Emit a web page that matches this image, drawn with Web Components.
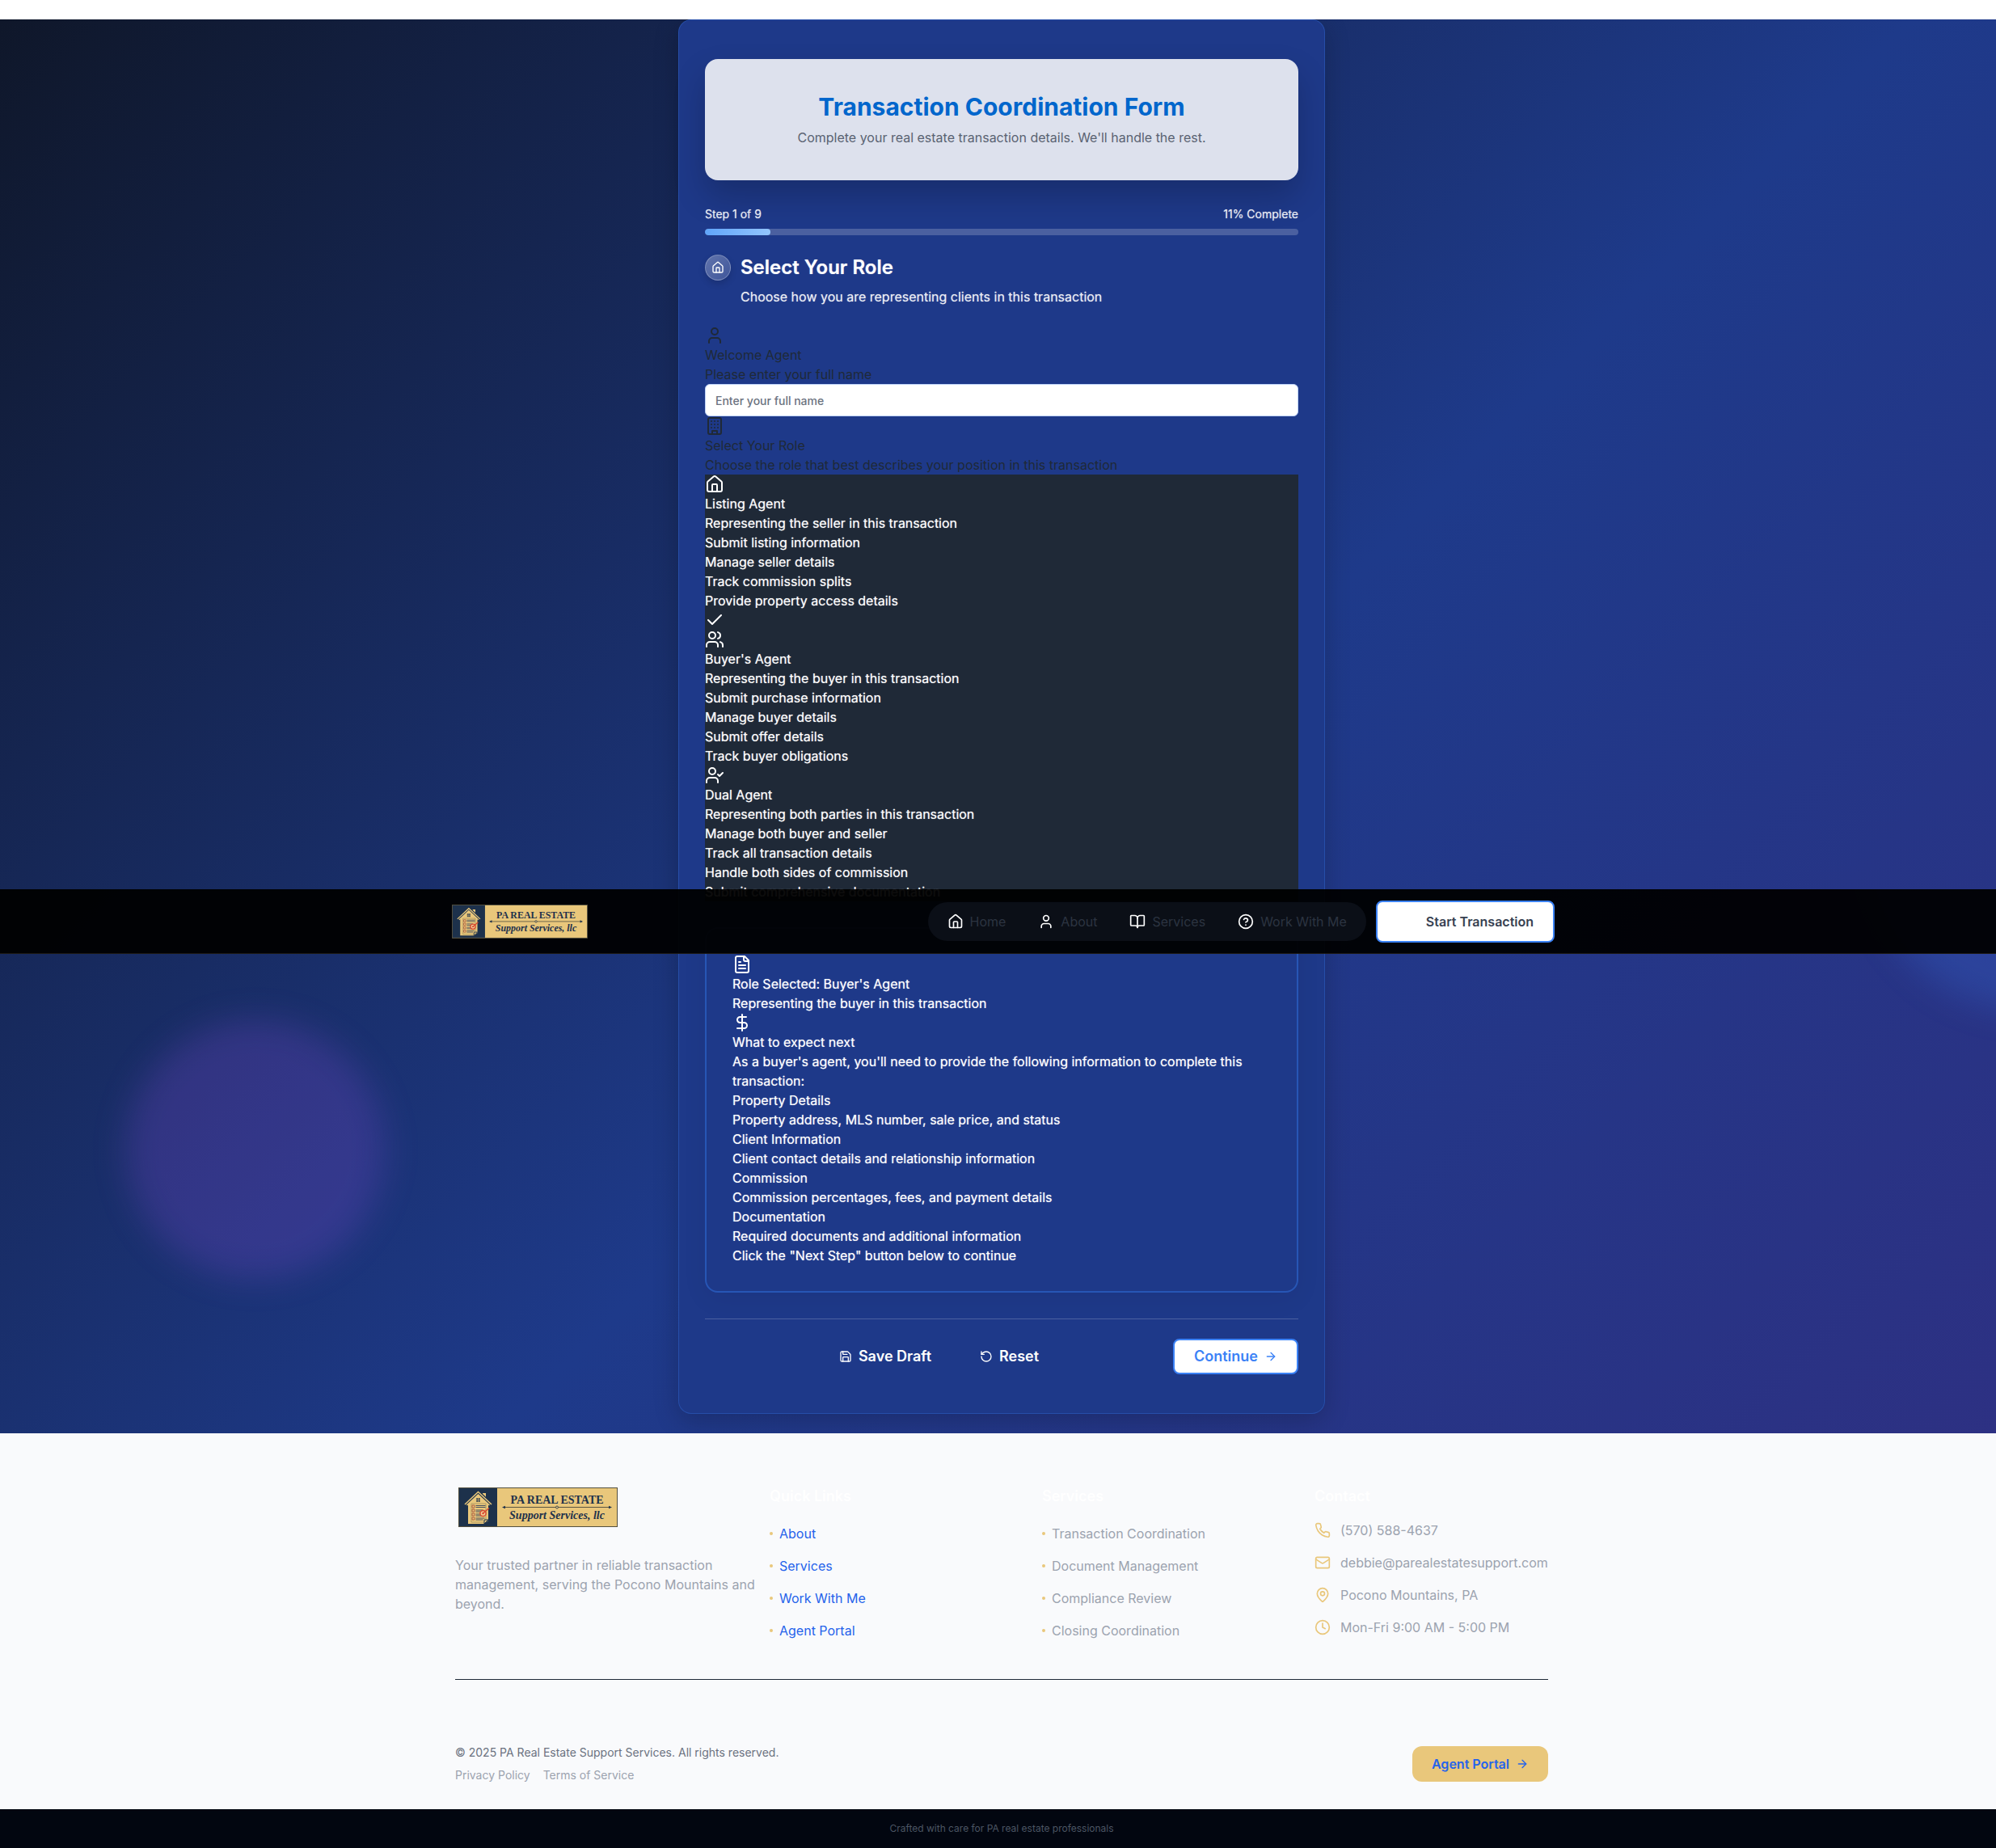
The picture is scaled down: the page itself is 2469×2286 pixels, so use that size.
<!DOCTYPE html>
<html lang="en">
<head>
<meta charset="utf-8">
<meta name="viewport" content="width=device-width, initial-scale=1">
<title>Transaction Coordination Form</title>
<style>
  :root { --rail: 9px; --gold: #e9c77b; --blue: #3b82f6; --ink: #1f2937; --muted: #9ca3af; --lift: 0 0 1px rgba(255,255,255,.6); }
  html, body { margin: 0; }
  body { position: relative; padding-top: 24px; background: #fff; color: var(--ink); font: 400 16px/24px Inter, "Liberation Sans", sans-serif; overflow-x: hidden; }
</style>
</head>
<body>
<pa-hero>
  <pa-form-card>
    <pa-form-banner>
      <span slot="title">Transaction Coordination Form</span>
      <span slot="text">Complete your real estate transaction details. We'll handle the rest.</span>
    </pa-form-banner>
    <pa-progress></pa-progress>
    <pa-step-heading>
      <span slot="title">Select Your Role</span>
      <span slot="text">Choose how you are representing clients in this transaction</span>
    </pa-step-heading>
    <pa-agent-name></pa-agent-name>
    <pa-lines icon="building">
      <div>Select Your Role</div>
      <div>Choose the role that best describes your position in this transaction</div>
    </pa-lines>
    <pa-role-list>
      <pa-lines icon="house" end-icon="check">
        <div>Listing Agent</div>
        <div>Representing the seller in this transaction</div>
        <div>Submit listing information</div>
        <div>Manage seller details</div>
        <div>Track commission splits</div>
        <div>Provide property access details</div>
      </pa-lines>
      <pa-lines icon="users">
        <div>Buyer's Agent</div>
        <div>Representing the buyer in this transaction</div>
        <div>Submit purchase information</div>
        <div>Manage buyer details</div>
        <div>Submit offer details</div>
        <div>Track buyer obligations</div>
      </pa-lines>
      <pa-lines icon="user-check">
        <div>Dual Agent</div>
        <div>Representing both parties in this transaction</div>
        <div>Manage both buyer and seller</div>
        <div>Track all transaction details</div>
        <div>Handle both sides of commission</div>
        <div>Submit comprehensive documentation</div>
      </pa-lines>
    </pa-role-list>
    <pa-summary>
      <pa-lines icon="file">
        <div>Role Selected: Buyer's Agent</div>
        <div>Representing the buyer in this transaction</div>
      </pa-lines>
      <pa-lines icon="dollar">
        <div>What to expect next</div>
        <div>As a buyer's agent, you'll need to provide the following information to complete this transaction:</div>
        <div>Property Details</div>
        <div>Property address, MLS number, sale price, and status</div>
        <div>Client Information</div>
        <div>Client contact details and relationship information</div>
        <div>Commission</div>
        <div>Commission percentages, fees, and payment details</div>
        <div>Documentation</div>
        <div>Required documents and additional information</div>
        <div>Click the "Next Step" button below to continue</div>
      </pa-lines>
    </pa-summary>
    <pa-form-actions></pa-form-actions>
  </pa-form-card>
</pa-hero>
<pa-footer></pa-footer>
<pa-nav></pa-nav>

<script>
const ICONS = {
  house: '<path d="M15 21v-8a1 1 0 0 0-1-1h-4a1 1 0 0 0-1 1v8"/><path d="M3 10a2 2 0 0 1 .709-1.528l7-5.999a2 2 0 0 1 2.582 0l7 5.999A2 2 0 0 1 21 10v9a2 2 0 0 1-2 2H5a2 2 0 0 1-2-2z"/>',
  user: '<path d="M19 21v-2a4 4 0 0 0-4-4H9a4 4 0 0 0-4 4v2"/><circle cx="12" cy="7" r="4"/>',
  building: '<rect width="16" height="20" x="4" y="2" rx="2"/><path d="M9 22v-4h6v4"/><path d="M8 6h.01M16 6h.01M12 6h.01M12 10h.01M12 14h.01M16 10h.01M16 14h.01M8 10h.01M8 14h.01"/>',
  check: '<path d="M20 6 9 17l-5-5"/>',
  users: '<path d="M16 21v-2a4 4 0 0 0-4-4H6a4 4 0 0 0-4 4v2"/><circle cx="9" cy="7" r="4"/><path d="M22 21v-2a4 4 0 0 0-3-3.87"/><path d="M16 3.13a4 4 0 0 1 0 7.75"/>',
  'user-check': '<path d="m16 11 2 2 4-4"/><path d="M16 21v-2a4 4 0 0 0-4-4H6a4 4 0 0 0-4 4v2"/><circle cx="9" cy="7" r="4"/>',
  file: '<path d="M15 2H6a2 2 0 0 0-2 2v16a2 2 0 0 0 2 2h12a2 2 0 0 0 2-2V7Z"/><path d="M14 2v4a2 2 0 0 0 2 2h4"/><path d="M10 9H8M16 13H8M16 17H8"/>',
  dollar: '<path d="M12 2v20"/><path d="M17 5H9.5a3.5 3.5 0 0 0 0 7h5a3.5 3.5 0 0 1 0 7H6"/>',
  save: '<path d="M15.2 3a2 2 0 0 1 1.4.6l3.8 3.8a2 2 0 0 1 .6 1.4V19a2 2 0 0 1-2 2H5a2 2 0 0 1-2-2V5a2 2 0 0 1 2-2z"/><path d="M17 21v-7a1 1 0 0 0-1-1H8a1 1 0 0 0-1 1v7"/><path d="M7 3v4a1 1 0 0 0 1 1h7"/>',
  reset: '<path d="M3 12a9 9 0 1 0 9-9 9.75 9.75 0 0 0-6.74 2.74L3 8"/><path d="M3 3v5h5"/>',
  arrow: '<path d="M5 12h14"/><path d="m12 5 7 7-7 7"/>',
  book: '<path d="M12 7v14"/><path d="M3 18a1 1 0 0 1-1-1V4a1 1 0 0 1 1-1h5a4 4 0 0 1 4 4 4 4 0 0 1 4-4h5a1 1 0 0 1 1 1v13a1 1 0 0 1-1 1h-6a3 3 0 0 0-3 3 3 3 0 0 0-3-3z"/>',
  help: '<circle cx="12" cy="12" r="10"/><path d="M9.09 9a3 3 0 0 1 5.83 1c0 2-3 3-3 3"/><path d="M12 17h.01"/>',
  phone: '<path d="M22 16.92v3a2 2 0 0 1-2.18 2 19.79 19.79 0 0 1-8.63-3.07 19.5 19.5 0 0 1-6-6 19.79 19.79 0 0 1-3.07-8.67A2 2 0 0 1 4.11 2h3a2 2 0 0 1 2 1.72 12.84 12.84 0 0 0 .7 2.81 2 2 0 0 1-.45 2.11L8.09 9.91a16 16 0 0 0 6 6l1.27-1.27a2 2 0 0 1 2.11-.45 12.84 12.84 0 0 0 2.81.7A2 2 0 0 1 22 16.92z"/>',
  mail: '<rect width="20" height="16" x="2" y="4" rx="2"/><path d="m22 7-8.97 5.7a1.94 1.94 0 0 1-2.06 0L2 7"/>',
  pin: '<path d="M20 10c0 4.993-5.539 10.193-7.399 11.799a1 1 0 0 1-1.202 0C9.539 20.193 4 14.993 4 10a8 8 0 0 1 16 0"/><circle cx="12" cy="10" r="3"/>',
  clock: '<circle cx="12" cy="12" r="10"/><path d="M12 6v6l4 2"/>'
};

function define(name, css, html) {
  customElements.define(name, class extends HTMLElement {
    connectedCallback() {
      if (this.shadowRoot) return;
      const root = this.attachShadow({ mode: 'open' });
      root.innerHTML = '<style>*{box-sizing:border-box}' + css + '</style>' +
        (typeof html === 'function' ? html(this) : html);
    }
  });
}

define('pa-icon', ':host{display:inline-block;flex:none;width:24px;height:24px}:host([size="20"]){width:20px;height:20px}:host([size="16"]){width:16px;height:16px}svg{display:block;width:100%;height:100%;fill:none;stroke:currentColor;stroke-width:2;stroke-linecap:round;stroke-linejoin:round}',
  el => `<svg viewBox="0 0 24 24" aria-hidden="true">${ICONS[el.getAttribute('name')]}</svg>`);

define('pa-logo', ':host{display:block;flex:none;width:197px}:host([small]){width:168px}svg{display:block;width:100%;height:auto}', `
<svg viewBox="0 0 197 49" role="img" aria-label="PA Real Estate Support Services, llc">
  <rect x=".5" y=".5" width="196" height="48" fill="#e9c77b" stroke="#54503f"/>
  <rect x="1" y="1" width="47" height="47" fill="#1d314b"/>
  <path d="M30 7h4v8l-4-4z" fill="#e9c77b"/>
  <path d="M12 20 24 8l13 12v21l-5 4H12z" fill="#e9c77b"/>
  <path d="M8 21 24.500 5.500 41 21" fill="none" stroke="#1d314b" stroke-width="4"/>
  <path d="M8 21 24.500 5.500 41 21M10.500 22 24.500 9 38.500 22" fill="none" stroke="#e9c77b" stroke-width="1.500"/>
  <path d="M22 13h5v5h-5zM24.500 13v5M22 15.500h5" fill="#1d314b" stroke="#e9c77b" stroke-width=".6"/>
  <path d="M16 20h18v23H16z" fill="#e9c77b" stroke="#8d8058" stroke-width=".6"/>
  <path d="M21.500 22.500h12M21.500 24.500h12M21.500 28h9M21.500 30h6M21.500 33h6M21.500 35h8M21.500 38h11M21.500 40h9" stroke="#35435a" stroke-width=".9"/>
  <path d="M17 22h3v3h-3zM17 27h3v3h-3zM17 32h3v3h-3zM17 37h3v3h-3z" fill="none" stroke="#a8553c" stroke-width=".9"/>
  <path d="m32 45v-5h5z" fill="#e9c77b" stroke="#1d314b"/>
  <circle cx="30.500" cy="32" r="3.600" fill="#f0cf98" stroke="#d9492f" stroke-width="1.500"/>
  <path d="m30 32.500 8-7" stroke="#d9492f" stroke-width="1.500"/>
  <circle cx="30.500" cy="32" r="1.200" fill="#d9492f"/>
  <text x="122" y="19.500" text-anchor="middle" font-family="Liberation Serif, serif" font-weight="700" font-size="14" fill="#1d314b">PA REAL ESTATE</text>
  <path d="M56 24.500h132" stroke="#4b4a3d" stroke-width=".9"/>
  <path d="m54 24.500 4-1.800v3.600zM190 24.500l-4-1.800v3.600z" fill="#1d314b"/>
  <circle cx="122" cy="24.500" r="1.500" fill="#e9c77b" stroke="#1d314b" stroke-width=".8"/>
  <text x="122" y="39" text-anchor="middle" font-family="Liberation Serif, serif" font-style="italic" font-weight="700" font-size="14" fill="#1d314b">Support Services, llc</text>
</svg>`);

define('pa-hero', `
:host{display:block;position:relative;overflow:hidden;padding:0 0 24px var(--rail);background:linear-gradient(135deg,#0f172a 0%,#1e3a8a 56%,#312e81 112%)}
.glow{position:absolute;border-radius:50%}
.violet{left:156px;bottom:191px;width:320px;height:320px;background:rgba(168,85,247,.18);filter:blur(20px)}
.clip{position:absolute;top:1076px;right:0;bottom:0;width:400px;overflow:hidden}
.azure{right:-240px;top:-250px;width:400px;height:400px;background:rgba(59,130,246,.2);filter:blur(20px)}
`, '<div class="glow violet"></div><div class="clip"><div class="glow azure"></div></div><slot></slot>');

define('pa-form-card', `
:host{display:block;position:relative;box-sizing:border-box;max-width:800px;margin:0 auto;padding:48px 32px;background:#1e3989;border:1px solid rgba(59,130,246,.3);border-radius:16px;box-shadow:0 8px 32px rgba(0,0,0,.2)}
`, '<slot></slot>');

define('pa-form-banner', `
:host{display:block;padding:41px 32px;text-align:center;background:#dde1ed;border-radius:16px;box-shadow:0 20px 40px rgba(0,0,0,.2)}
h1{margin:0 0 8px;font-size:30px;line-height:36px;font-weight:700;color:#0066cc}
p{margin:0;color:#5a6372}
`, '<h1><slot name="title"></slot></h1><p><slot name="text"></slot></p>');

define('pa-progress', `
:host{display:block;margin-top:32px;font-size:14px;line-height:20px;color:rgba(255,255,255,.85);text-shadow:var(--lift)}
.row{display:flex;justify-content:space-between;margin-bottom:8px}
.track{height:8px;border-radius:4px;background:rgba(255,255,255,.2);overflow:hidden}
.fill{width:11%;height:100%;border-radius:4px;background:linear-gradient(90deg,#60a5fa,#93c5fd)}
`, '<div class="row"><span>Step 1 of 9</span><span>11% Complete</span></div><div class="track" role="progressbar" aria-valuenow="11" aria-valuemin="0" aria-valuemax="100" aria-label="Form progress"><div class="fill"></div></div>');

define('pa-step-heading', `
:host{display:flex;gap:12px;margin:24px 0;text-shadow:var(--lift)}
.badge{display:flex;flex:none;align-items:center;justify-content:center;width:32px;height:32px;border:1px solid rgba(255,255,255,.25);border-radius:50%;background:linear-gradient(135deg,rgba(255,255,255,.3),rgba(255,255,255,.15));color:#fff;box-shadow:0 4px 8px rgba(0,0,0,.15)}
h2{margin:0 0 8px;font-size:24px;line-height:32px;font-weight:600;color:#fff}
p{margin:0;color:rgba(255,255,255,.85)}
`, '<span class="badge"><pa-icon name="house" size="16"></pa-icon></span><div><h2><slot name="title"></slot></h2><p><slot name="text"></slot></p></div>');

define('pa-lines', ':host{display:block}pa-icon{display:block}', el =>
  `<pa-icon name="${el.getAttribute('icon')}"></pa-icon><slot></slot>` +
  (el.hasAttribute('end-icon') ? `<pa-icon name="${el.getAttribute('end-icon')}"></pa-icon>` : ''));

define('pa-agent-name', `
:host{display:block}
pa-icon,label{display:block}
input{display:block;width:100%;height:40px;padding:0 12px;border:1px solid #bfd3f8;border-radius:6px;background:#fff;color:#1f2937;font:500 14px/20px Inter,"Liberation Sans",sans-serif}
input::placeholder{color:#6b7280;opacity:1}
`, '<pa-icon name="user"></pa-icon><div>Welcome Agent</div><label for="name">Please enter your full name</label><input id="name" type="text" placeholder="Enter your full name">');

define('pa-role-list', ':host{display:block;background:#1f2937;color:#fff;text-shadow:var(--lift)}', '<slot></slot>');

define('pa-summary', `
:host{display:block;margin:32px 0;padding:32px;border:2px solid #2756b5;border-radius:16px;color:#fff;text-shadow:var(--lift);box-shadow:0 8px 32px rgba(0,0,0,.06)}
`, '<slot></slot>');

define('pa-form-actions', `
:host{display:flex;align-items:center;justify-content:space-between;padding-top:24px;border-top:1px solid rgba(255,255,255,.2)}
.mid{display:flex;gap:8px}
button{display:flex;align-items:center;gap:8px;height:44px;padding:0 24px;border:2px solid transparent;border-radius:8px;background:none;color:#fff;font:600 18px/24px Inter,"Liberation Sans",sans-serif}
.next{background:#fff;border-color:#3b82f6;color:#3b82f6}
`, '<span></span><div class="mid"><button type="button"><pa-icon name="save" size="16"></pa-icon>Save Draft</button><button type="button"><pa-icon name="reset" size="16"></pa-icon>Reset</button></div><button class="next" type="button">Continue<pa-icon name="arrow" size="16"></pa-icon></button>');

define('pa-nav', `
:host{display:block;position:absolute;top:1100px;left:0;right:0;box-sizing:border-box;height:80px;padding-left:var(--rail);background:rgba(0,0,0,.95);box-shadow:inset 0 -1px rgba(233,199,123,.12)}
.inner{display:flex;align-items:center;justify-content:space-between;height:100%;max-width:1400px;margin:0 auto;padding:0 16px;box-sizing:border-box}
.home{padding:0 4px}
.right,nav{display:flex;align-items:center}
.right{gap:12px}
nav{gap:8px;height:48px;padding:0 8px;border-radius:24px;background:#0b0f17}
a{display:flex;align-items:center;gap:8px;text-decoration:none}
nav a{padding:0 16px;color:#2c3441}
nav pa-icon{color:#fff}
.cta{height:52px;padding:0 24px 0 60px;border:2px solid #3b82f6;border-radius:8px;background:#fff;color:#374151;font-weight:600}
`, `<div class="inner"><a class="home" href="#"><pa-logo small></pa-logo></a><div class="right"><nav>
<a href="#"><pa-icon name="house" size="20"></pa-icon>Home</a>
<a href="#"><pa-icon name="user" size="20"></pa-icon>About</a>
<a href="#"><pa-icon name="book" size="20"></pa-icon>Services</a>
<a href="#"><pa-icon name="help" size="20"></pa-icon>Work With Me</a>
</nav><a class="cta" href="#">Start Transaction</a></div></div>`);

define('pa-footer', `
:host{display:block;background:#f9fafc;color:#9ca3af}
.wrap{padding-left:var(--rail)}
.inner{max-width:1352px;margin:0 auto;padding:64px 0 32px}
.cols{display:grid;grid-template-columns:373fr 321fr 321fr 289fr;gap:16px;padding-bottom:48px;border-bottom:1px solid #1f2937}
pa-logo{margin:3px 4px 35px}
p{margin:0}
h3{margin:0 0 16px;font-size:18px;line-height:28px;font-weight:600;color:#fff}
ul{display:flex;flex-direction:column;gap:16px;margin:0;padding:0;list-style:none}
ul.dots{padding-top:4px}
li{display:flex;align-items:center;gap:12px;white-space:nowrap}
.dots li{gap:8px}
.dots li::before{content:"";width:4px;height:4px;border-radius:50%;background:var(--gold)}
a{color:#2563eb;text-decoration:none}
li pa-icon{color:var(--gold)}
.base{display:flex;align-items:center;justify-content:space-between;padding-top:80px;font-size:14px;line-height:20px}
.copy{margin-bottom:8px;color:#6b7280}
.legal{display:flex;gap:16px}
.legal a{color:#9ca3af}
.portal{display:flex;align-items:center;gap:8px;height:44px;padding:0 24px;border-radius:12px;background:var(--gold);font-size:16px;font-weight:600}
.credit{padding:12px 0 12px var(--rail);background:#020610;color:#4b5563;text-align:center;font-size:12px;line-height:24px}
`, `<div class="wrap"><div class="inner"><div class="cols">
<div><pa-logo></pa-logo><p>Your trusted partner in reliable transaction management, serving the Pocono Mountains and beyond.</p></div>
<div><h3>Quick Links</h3><ul class="dots"><li><a href="#">About</a></li><li><a href="#">Services</a></li><li><a href="#">Work With Me</a></li><li><a href="#">Agent Portal</a></li></ul></div>
<div><h3>Services</h3><ul class="dots"><li>Transaction Coordination</li><li>Document Management</li><li>Compliance Review</li><li>Closing Coordination</li></ul></div>
<div><h3>Contact</h3><ul><li><pa-icon name="phone" size="20"></pa-icon>(570) 588-4637</li><li><pa-icon name="mail" size="20"></pa-icon>debbie@parealestatesupport.com</li><li><pa-icon name="pin" size="20"></pa-icon>Pocono Mountains, PA</li><li><pa-icon name="clock" size="20"></pa-icon>Mon-Fri 9:00 AM - 5:00 PM</li></ul></div>
</div>
<div class="base"><div><p class="copy">© 2025 PA Real Estate Support Services. All rights reserved.</p><div class="legal"><a href="#">Privacy Policy</a><a href="#">Terms of Service</a></div></div>
<a class="portal" href="#">Agent Portal<pa-icon name="arrow" size="16"></pa-icon></a></div>
</div></div><div class="credit">Crafted with care for PA real estate professionals</div>`);
</script>
</body>
</html>
